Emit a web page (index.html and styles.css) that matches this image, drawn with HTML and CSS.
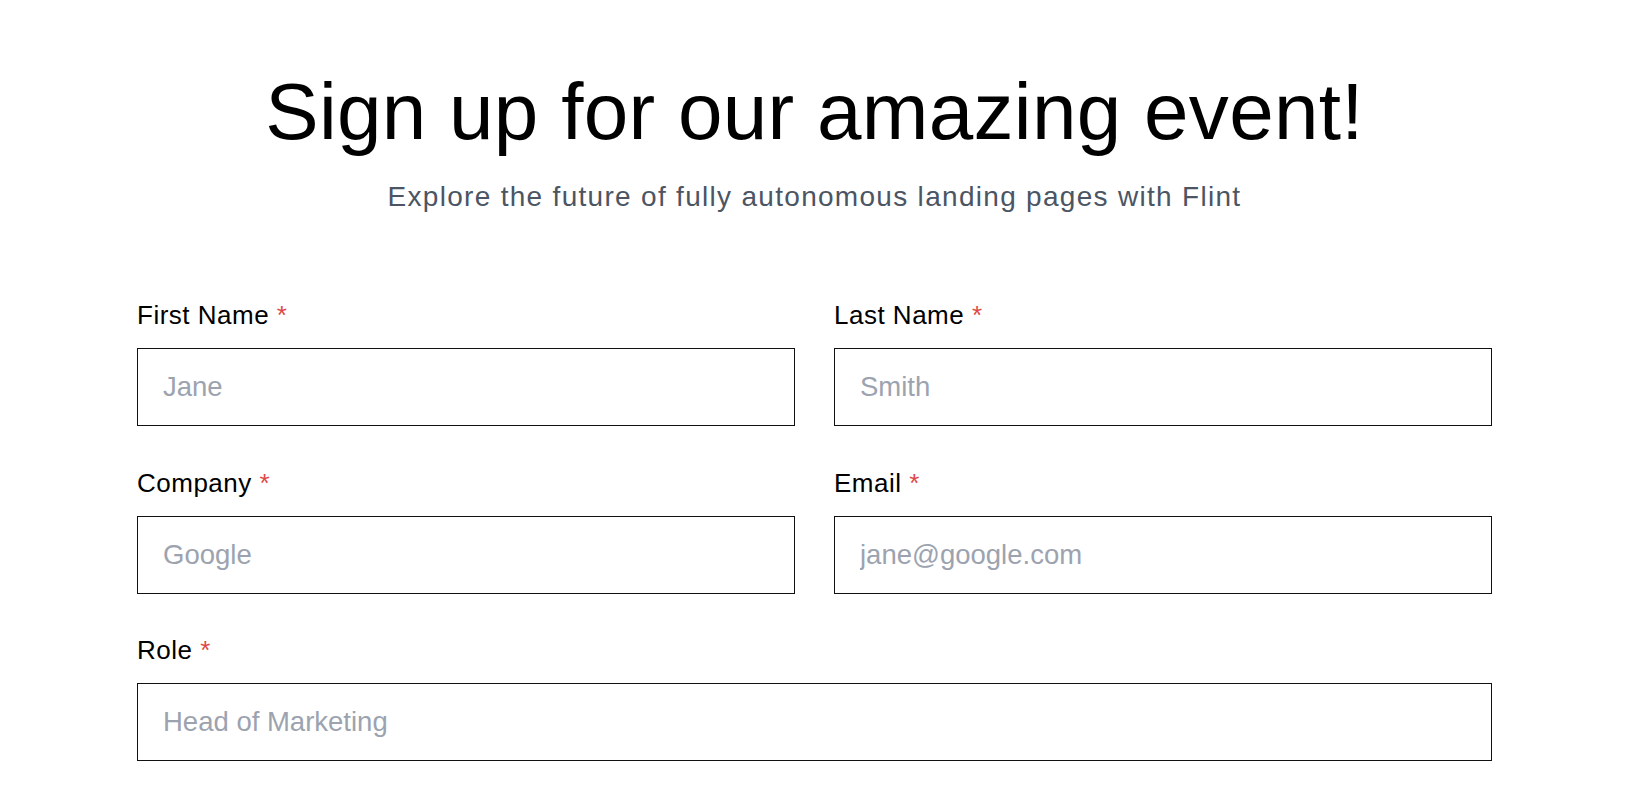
FILE: index.html
```html
<!DOCTYPE html>
<html lang="en">
<head>
<meta charset="utf-8">
<title>Sign up</title>
<link rel="stylesheet" href="styles.css">
</head>
<body>
<main class="page">
  <header class="hero">
    <h1 class="title">Sign up for our amazing event!</h1>
    <p class="subtitle">Explore the future of fully autonomous landing pages with Flint</p>
  </header>
  <form class="form">
    <div class="field">
      <label class="label" for="fn">First Name <span class="req">*</span></label>
      <input class="input" id="fn" type="text" placeholder="Jane">
    </div>
    <div class="field">
      <label class="label" for="ln">Last Name <span class="req">*</span></label>
      <input class="input" id="ln" type="text" placeholder="Smith">
    </div>
    <div class="field">
      <label class="label" for="co">Company <span class="req">*</span></label>
      <input class="input" id="co" type="text" placeholder="Google">
    </div>
    <div class="field">
      <label class="label" for="em">Email <span class="req">*</span></label>
      <input class="input" id="em" type="email" placeholder="jane@google.com">
    </div>
    <div class="field field-wide">
      <label class="label" for="ro">Role <span class="req">*</span></label>
      <input class="input" id="ro" type="text" placeholder="Head of Marketing">
    </div>
  </form>
</main>
</body>
</html>
```

FILE: styles.css
```css
html, body {
  margin: 0;
  padding: 0;
  background: #ffffff;
  overflow: hidden;
}

body {
  font-family: "Liberation Sans", Arial, sans-serif;
  color: #000000;
}

.page {
  width: 1355px;
  margin-left: 137px;
  padding-top: 64px;
}

.hero {
  text-align: center;
}

.title {
  margin: 0;
  font-size: 80px;
  line-height: 96px;
  font-weight: 400;
  letter-spacing: 0.3px;
  color: #000000;
}

.subtitle {
  margin: 19px 0 0;
  font-size: 28px;
  line-height: 36px;
  letter-spacing: 1.3px;
  color: #4b5563;
}

.form {
  margin-top: 84px;
  display: grid;
  grid-template-columns: 1fr 1fr;
  column-gap: 39px;
  row-gap: 40.5px;
}

.field {
  display: flex;
  flex-direction: column;
}

.field-wide {
  grid-column: 1 / -1;
}

.label {
  font-size: 26px;
  line-height: 32px;
  letter-spacing: 0.5px;
  margin-bottom: 17px;
  color: #000000;
}

.req {
  color: #e04848;
}

.input {
  box-sizing: border-box;
  height: 78px;
  width: 100%;
  margin: 0;
  border: 1px solid #111111;
  border-radius: 0;
  padding: 0 24px 0 25px;
  font-family: "Liberation Sans", Arial, sans-serif;
  font-size: 27.5px;
  color: #111111;
  background: #ffffff;
  outline: none;
}

.input::placeholder {
  color: #9ca3af;
  opacity: 1;
}
```
